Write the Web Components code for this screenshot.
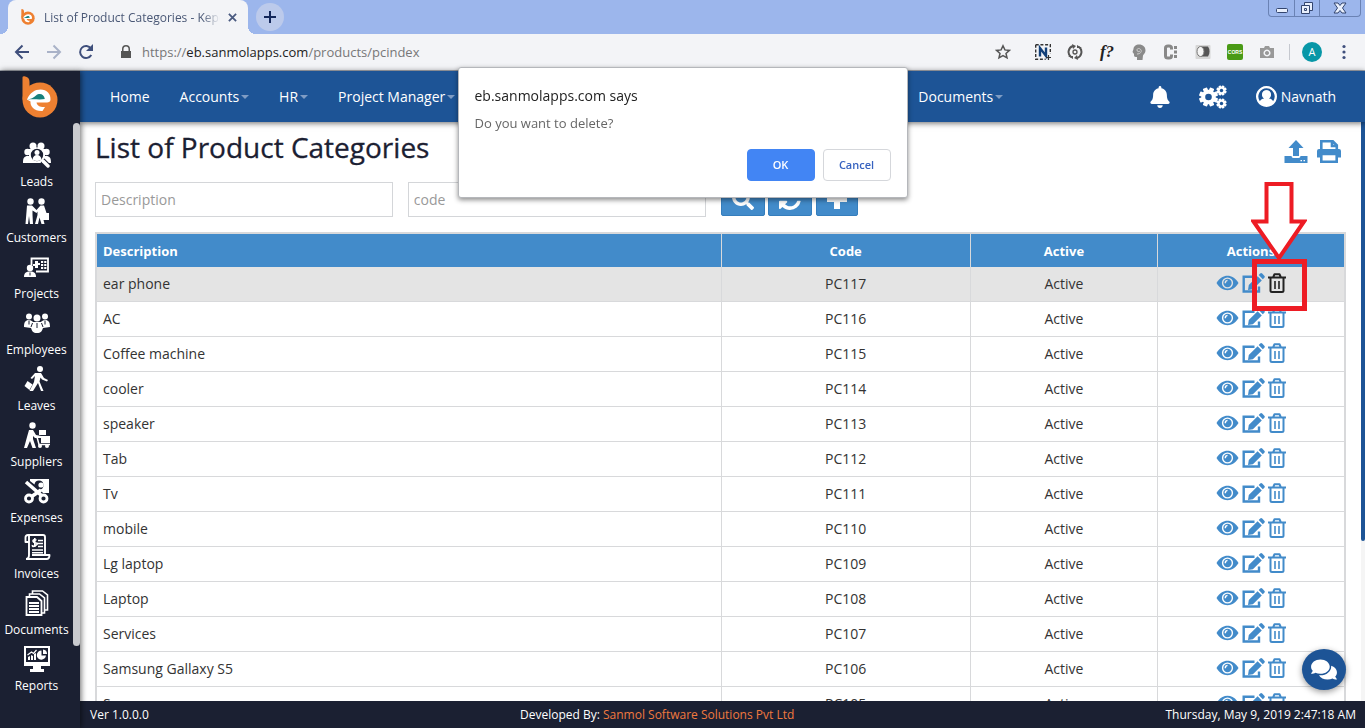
<!DOCTYPE html>
<html lang="en">
<head>
<meta charset="utf-8">
<title>List of Product Categories</title>
<style>
  html, body { margin: 0; height: 100%; }
  body {
    --navy: #1b2032; --blue: #1d5496; --accent: #428bca; --line: #d8d9db;
    font-family: "Open Sans", sans-serif; font-size: 14px; color: #333;
    display: flex; flex-direction: column; overflow: hidden; background: #fff;
  }
</style>
</head>
<body>
<browser-chrome></browser-chrome>
<app-shell>
  <app-sidebar slot="side">
    <side-item icon="leads">Leads</side-item>
    <side-item icon="customers">Customers</side-item>
    <side-item icon="projects">Projects</side-item>
    <side-item icon="employees">Employees</side-item>
    <side-item icon="leaves">Leaves</side-item>
    <side-item icon="suppliers">Suppliers</side-item>
    <side-item icon="expenses">Expenses</side-item>
    <side-item icon="invoices">Invoices</side-item>
    <side-item icon="documents">Documents</side-item>
    <side-item icon="reports">Reports</side-item>
  </app-sidebar>
  <app-navbar slot="nav"></app-navbar>
  <category-page></category-page>
  <app-footer slot="foot"></app-footer>
</app-shell>
<chat-button></chat-button>
<confirm-dialog heading="eb.sanmolapps.com says">Do you want to delete?</confirm-dialog>

<script>
const define = (name, markup, ready) => customElements.define(name, class extends HTMLElement {
  constructor() {
    super();
    this.attachShadow({ mode: 'open' });
  }
  connectedCallback() {
    if (this.shadowRoot.childNodes.length) return;
    const t = document.createElement('template');
    t.innerHTML = '<style>*{box-sizing:border-box}[hidden]{display:none}</style>' + (typeof markup === 'function' ? markup(this) : markup);
    this.shadowRoot.append(t.content.cloneNode(true));
    if (ready) ready(this, this.shadowRoot);
  }
});

const gear = (cx, cy, r, teeth, hole) => {
  let s = '';
  for (let i = 0; i < teeth; i++) {
    s += `<rect x="${cx - r * .24}" y="${cy - r}" width="${r * .48}" height="${r}" rx=".6" transform="rotate(${i * 360 / teeth + 22.5} ${cx} ${cy})"/>`;
  }
  return `${s}<circle cx="${cx}" cy="${cy}" r="${r * .76}"/><circle cx="${cx}" cy="${cy}" r="${hole}" fill="var(--hole)"/>`;
};
const S = 'fill="none" stroke="currentColor"';

/* name: [viewBox, drawing] */
const ICONS = {
  logo: ['0 0 36 42', `<circle cx="18" cy="24" r="17.500" fill="#ee8031"/><path d="M.5 24V1.500Q.5 0 2.500 .2Q7.500 1 7.500 6V13Z" fill="#ee8031"/>
    <path d="M5 23.500C8 16.500 13 13.500 18.500 13.500C25 13.500 28.800 18 28.500 23.500C28.400 25.800 27 26.500 25 26.500H14.500C15 30 19 31.500 23 31L20.500 35C12.500 35.500 8 30.500 8.500 25.500Z" fill="#fff"/>
    <path d="M5 23.500C9 22.800 11.500 22 14 19.500C17 17 22 17.500 22.800 23C19 23.800 13 23 5 23.500Z" fill="#17807c"/>`],
  back: ['0 0 16 16', `<path ${S} stroke-width="2" d="M15 8H2M8.500 1.500L2 8l6.500 6.500"/>`],
  forward: ['0 0 16 16', `<path ${S} stroke-width="2" d="M1 8h13M7.500 1.500L14 8l-6.500 6.500"/>`],
  reload: ['0 0 16 16', `<path ${S} stroke-width="2" d="M13.300 11A6 6 0 1 1 13 4.500"/><path d="M15 0v7H8z"/>`],
  lock: ['0 0 12 14', `<path d="M2 6V4a4 4 0 0 1 8 0v2h1v7H1V6zM3.500 6h5V4a2.500 2.500 0 0 0-5 0z" fill-rule="evenodd"/>`],
  star: ['0 0 16 16', `<path ${S} stroke-width="1.500" d="M8 1.800l1.900 4.100 4.500.500-3.400 3 1 4.400L8 11.500l-4 2.300 1-4.400-3.400-3 4.500-.500z"/>`],
  tabclose: ['0 0 10 10', `<path ${S} stroke-width="2" d="M1 1l8 8M9 1L1 9"/>`],
  newtab: ['0 0 12 12', `<path ${S} stroke-width="2" d="M6 0v12M0 6h12"/>`],
  dots: ['0 0 16 16', `<circle cx="8" cy="2.500" r="1.600"/><circle cx="8" cy="8" r="1.600"/><circle cx="8" cy="13.500" r="1.600"/>`],
  frame: ['0 0 16 16', `<path fill="none" stroke="#333" stroke-width="1.400" stroke-dasharray="3 1.700" d="M.7.7h14.600v9M.7.7v14.600h10"/><path fill="none" stroke="#123f78" stroke-width="2.400" d="M5 12.500V4l6 8V3.500"/><path fill="none" stroke="#333" stroke-width="1.200" d="M13.500 11v5M11 13.500h5"/>`],
  sync: ['0 0 16 16', `<path ${S} stroke-width="2" d="M6 2A6.300 6.300 0 0 0 4 13M10 14A6.300 6.300 0 0 0 12 3"/><path d="M5 0l4 2-3 3zM11 16l-4-2 3-3zM1 12h5v3zM15 4h-5V1z"/><circle cx="8" cy="8" r="2" ${S} stroke-width="1.300"/>`],
  head: ['0 0 16 16', `<path d="M8 .5c4 0 6.500 2.500 6.500 6 0 2.500-1.500 3-2.500 5L11.500 16H6v-3c-3 .500-3-1-3-3L1.500 8 2.500 5c0-2.500 2.500-4.500 5.500-4.500z" fill="#8a8a8a"/><path fill="none" stroke="#d0d0d0" d="M6 10c3 0 5-2 4-4s-4-2-4 0 2 2 3 1"/>`],
  colons: ['0 0 16 16', `<path ${S} stroke-width="3" d="M8.500 5.500V4q0-2-2.500-2H5Q2.500 2 2.500 4v8q0 2 2.500 2h1q2.500 0 2.500-2v-1.500"/><path d="M11 2h3v3h-3zM11 6.500h3v3h-3zM11 11h3v3h-3z"/>`],
  shade: ['0 0 16 16', `<rect x=".5" y="1" width="15" height="14" rx="1" fill="#d6d6d6"/><path d="M6 2.500h7q1.500 2 1.500 5t-1.500 5H6z" fill="#555"/><ellipse cx="5.500" cy="7.500" rx="3.500" ry="5" fill="#f4f4f4" stroke="#777"/>`],
  camera: ['0 0 16 16', `<path fill-rule="evenodd" d="M1 4h4l1-2h4l1 2h4v10H1zM8 5.500a3.500 3.500 0 1 0 .01 0zM8 7a2 2 0 1 1-.01 0z"/>`],
  bell: ['0 0 448 512', '<path d="M224 512c35.320 0 63.970-28.650 63.970-64H160.030c0 35.350 28.650 64 63.970 64zm215.390-149.710c-19.320-20.760-55.470-51.990-55.470-154.290 0-77.700-54.480-139.900-127.940-155.160V32c0-17.670-14.320-32-31.980-32s-31.980 14.330-31.980 32v20.840C118.560 68.100 64.080 130.300 64.080 208c0 102.300-36.150 133.530-55.470 154.290-6 6.450-8.660 14.160-8.610 21.710.11 16.400 12.980 32 32.100 32h383.800c19.120 0 32-15.600 32.100-32 .05-7.550-2.610-15.270-8.610-21.710z"/>'],
  cogs: ['0 0 28 24', `<g style="--hole:#1d5496">${gear(9.500, 12, 9.500, 8, 3.300)}${gear(22.500, 5.500, 5.200, 8, 1.700)}${gear(22.500, 18.500, 5.200, 8, 1.700)}</g>`],
  user: ['0 0 20 20', `<path fill-rule="evenodd" d="M10 0a10 10 0 1 1-.01 0zM10 2.200a7.800 7.800 0 0 0-6.300 12.300c1-1.700 2.300-2.500 4-2.500a4.300 4.300 0 1 1 4.600 0c1.700 0 3 .800 4 2.500A7.800 7.800 0 0 0 10 2.200z"/><circle cx="10" cy="8" r="3.900"/>`],
  eye: ['0 0 22 16', `<path d="M0 8C3 3 7 .8 11 .8S19 3 22 8c-3 5-7 7.200-11 7.200S3 13 0 8z"/><circle cx="11" cy="8" r="5.600" fill="var(--row,#fff)"/><circle cx="11" cy="8" r="4.200"/><path d="M8.800 8.200A2.600 2.600 0 0 1 11 5.400" fill="none" stroke="var(--row,#fff)" stroke-width="1.400"/>`],
  edit: ['0 0 23 20', `<path ${S} stroke-width="2.400" d="M12.500 3.700H1.700V18.500h15.300v-5"/><path d="M6.800 12L15.600 3.200l4.200 4.200-8.900 8.800L6 17zM16.700 2.100L18.200.6q1-1 2 0l2.100 2.100q1 1 0 2l-1.500 1.500z"/>`],
  trash: ['0 0 18 20', `<path ${S} stroke-width="2" stroke-linejoin="round" d="M0 4.500h18M5.300 4L6.500 1.200h5L12.700 4M2.500 5v12.500q0 1.500 1.500 1.500h10q1.500 0 1.500-1.500V5"/><path ${S} stroke-width="1.600" d="M7 8v8M11 8v8"/>`],
  upload: ['0 0 23 23', `<path d="M11.500 0L19 8h-4.500v8h-6V8H4zM0 16h7q0 2 2 2h5q2 0 2-2h7v7H0z"/><path fill="#fff" d="M16 20h1.500v1.300H16zM19 20h1.500v1.300H19z"/>`],
  print: ['0 0 24 23', `<path ${S} stroke-width="2.600" d="M4.300 10V1.300h11.500l4 4V10M15 1v5h5"/><path d="M0 17.500V11q0-2 2-2h20q2 0 2 2v6.500h-4V14H4v3.500z"/><path ${S} stroke-width="2.600" d="M4.300 14h15.400v7.700H4.300z"/>`],
  search: ['0 0 512 512', '<path d="M505 442.700L405.300 343c-4.500-4.500-10.600-7-17-7H372c27.600-35.300 44-79.700 44-128C416 93.100 322.900 0 208 0S0 93.100 0 208s93.100 208 208 208c48.300 0 92.700-16.400 128-44v16.300c0 6.400 2.500 12.500 7 17l99.700 99.700c9.400 9.400 24.600 9.400 33.900 0l28.300-28.300c9.400-9.400 9.400-24.600.1-34zM208 336c-70.700 0-128-57.200-128-128 0-70.700 57.200-128 128-128 70.700 0 128 57.200 128 128 0 70.700-57.200 128-128 128z"/>'],
  refresh: ['0 0 1536 1536', '<path d="M1511 928q0 5-1 7-64 268-268 434.500T764 1536q-146 0-282.500-55T238 1324l-129 129q-19 19-45 19t-45-19-19-45V960q0-26 19-45t45-19h448q26 0 45 19t19 45-19 45l-137 137q71 66 161 102t187 36q134 0 250-65t186-179q11-17 53-117 8-23 30-23h192q13 0 22.500 9.500t9.500 22.500zm25-800v448q0 26-19 45t-45 19h-448q-26 0-45-19t-19-45 19-45l138-138Q969 256 768 256q-134 0-250 65T332 500q-11 17-53 117-8 23-30 23H50q-13 0-22.500-9.500T18 608v-7q65-268 270-434.500T768 0q146 0 284 55.500T1297 212l130-129q19-19 45-19t45 19 19 45z"/>'],
  plus: ['0 0 20 20', '<path d="M7 0h6v7h7v6h-7v7H7v-7H0V7h7z"/>'],
  chat: ['0 0 576 512', '<path d="M416 192c0-88.400-93.100-160-208-160S0 103.600 0 192c0 34.300 14.100 65.900 38 92-13.400 30.200-35.500 54.200-35.800 54.500-2.200 2.300-2.800 5.700-1.500 8.700S4.800 352 8 352c36.600 0 66.900-12.300 88.700-25 32.200 15.700 70.300 25 111.300 25 114.900 0 208-71.600 208-160zm122 220c23.900-26 38-57.700 38-92 0-66.900-53.500-124.200-129.300-148.100.9 6.600 1.300 13.300 1.300 20.100 0 105.900-107.700 192-240 192-10.800 0-21.300-.8-31.700-1.900C207.800 439.600 281.800 480 368 480c41 0 79.100-9.200 111.300-25 21.800 12.700 52.100 25 88.700 25 3.200 0 6.100-1.900 7.300-4.800 1.300-2.900.7-6.300-1.500-8.700-.3-.3-22.400-24.200-35.800-54.500z"/>'],
  winmin: ['0 0 14 12', '<rect x="1.500" y="6.500" width="11" height="4" rx="1" fill="#e8effc" stroke="#33456e"/>'],
  winmax: ['0 0 14 12', '<path fill="#e8effc" stroke="#33456e" d="M4.500.5h8v8h-8z"/><path fill="#e8effc" stroke="#33456e" d="M1.500 3.500h8v8h-8zM4.500 6.500h2v2h-2z"/>'],
  winclose: ['0 0 14 12', '<path fill="#e8effc" stroke="#33456e" d="M1 1h4l2 2.500L9 1h4L9.500 6l3.500 5H9L7 8.500 5 11H1l3.500-5z"/>'],

  leads: ['0 0 28 26', `<circle cx="10" cy="4" r="3.500"/><circle cx="18" cy="4" r="3.500"/><circle cx="4.500" cy="10" r="3.200"/><circle cx="23.500" cy="10" r="3.200"/><path d="M0 21c0-5 1-7 5-7h18c4 0 5 2 5 7zM6 7h16v8H6z"/><circle cx="14" cy="13" r="7" fill="#1b2032" stroke="#fff" stroke-width="1.600"/><circle cx="14" cy="10.500" r="2.500"/><path d="M9.500 17.500c.5-3 2-4.500 4.500-4.500s4 1.500 4.500 4.500Q14 20.500 9.500 17.500z"/><path stroke="#1b2032" stroke-width="5.500" d="M19.500 18.500l5 5"/><path stroke="#fff" stroke-width="3.400" stroke-linecap="round" d="M20 19l5 5"/>`],
  customers: ['0 0 28 26', `<circle cx="7.500" cy="3.500" r="3.200"/><circle cx="18.500" cy="3.500" r="3.200"/><path d="M4 7.500h5l4.500 4.500 4-4.500h3.500L23.500 15H26v7h-5.500l1 4h-3L16.500 19.500 15 26h-3l2.500-9v-3.500l-1 1.500-4-2.500V17l.5 9H7l-1-8-1 8H2.500z"/>`],
  projects: ['0 0 28 26', `<path ${S} stroke-width="1.800" d="M8.500 11V4.500H25v13H13"/><circle cx="7" cy="14" r="3.200"/><path d="M1 23c0-4 2-5.500 6-5.500s6 1.500 6 5.500zM12 7h3v2h2v2h-2v3h-3v-2h-2v-2h2zM18 7h2.200v2H18zM21.200 7h2.200v2h-2.200zM18 10h2.200v2H18zM21.200 10h2.200v2h-2.200zM18 13h2.200v2H18zM21.200 13h2.200v2h-2.200z"/><path stroke="#1b2032" d="M7 18.500v3"/>`],
  employees: ['0 0 28 26', `<circle cx="6" cy="6.500" r="3"/><circle cx="22" cy="6.500" r="3"/><circle cx="14" cy="8" r="3.500"/><path d="M1 17c0-5 1.500-7 5-7 2 0 3 1 4 2h8c1-1 2-2 4-2 3.500 0 5 2 5 7l-7 1c-1 3-2 5-6 5s-5-2-6-5z"/><path stroke="#1b2032" d="M6 10.500v4M22 10.500v4M14 13v5M9.500 13l-1.500 4M18.500 13l1.500 4"/>`],
  leaves: ['0 0 28 26', `<circle cx="17" cy="3" r="3"/><path d="M12 7h6l3 5 4 2-1 1.500-5-2-1.500-2-1 4 4 9.500H18l-3-8-5 8H6.500L11 16l1-6-3 3-1.500-1z"/><path d="M4.500 15l5 3.500L6.500 24 1.500 20z"/>`],
  suppliers: ['0 0 28 26', `<circle cx="9.500" cy="3.500" r="3.200"/><path d="M6 8h4l3 5 5 1v2h-6l-2-2v3l3 9H9.500L7 19l-3 7H1l3-11z"/><path ${S} stroke-width="1.500" d="M14 15l2 7.500h11"/><path d="M16 8h7v5h-7zM18 14h9v7h-9z"/><circle cx="17" cy="24" r="2"/><circle cx="24" cy="24" r="2"/>`],
  expenses: ['0 0 28 26', `<path fill-rule="evenodd" d="M7 1h19v14h-6l-3-3.500a4.500 4.500 0 1 0-5.500-5L7 3z"/><circle cx="18" cy="7" r="2.600"/><path stroke="#fff" stroke-width="3.600" d="M3 4l16 14M18 12L8 19"/><circle cx="6" cy="20.500" r="3.500" ${S} stroke-width="2.800"/><circle cx="20.500" cy="20.500" r="3.500" ${S} stroke-width="2.800"/>`],
  invoices: ['0 0 28 26', `<path ${S} stroke-width="1.900" stroke-linejoin="round" d="M6 8H2.500V3.500Q2.500 1 5 1H20q2 0 2 2V20M6 3v18q0 4-3 4M6 1v20M9 21H26.500q0 4-3 4H4"/><path ${S} stroke-width="1.600" d="M13.500 6q-3.500-1-3.500.8T13 9t-.500 2.500T9.500 11M11.800 4v9M15 6.500h5M15 9.500h5M15 12.500h5M9 16h11M9 18.800h11"/>`],
  documents: ['0 0 28 26', `<path ${S} stroke-width="1.600" d="M9.500 4.500V1h10l5 4v15h-3M6.500 7.500V4h10l5 4v15h-3"/><path ${S} stroke-width="1.800" d="M3.500 7H14l4.500 4v14h-15zM6 13h10M6 16h10M6 19h10M6 22h10"/>`],
  reports: ['0 0 28 26', `<path fill-rule="evenodd" d="M1 0h26v20h-9v3h3v3H7v-3h3v-3H1zM3 2v14h22V2z"/><path d="M5 14v-3l2-1v4zM8 14V9l2 1v4zM11 14V8l2-1v7z"/><path ${S} stroke-width="1.200" d="M4.500 9l4-3 2 1.500 3-3.500"/><path d="M18.500 4.500v5h4.500a4.600 4.600 0 1 1-4.500-5z"/><path d="M20 3.500a4.500 4.500 0 0 1 4 4.500h-4z"/>`]
};

define('eb-icon', el => {
  const [box, art] = ICONS[el.getAttribute('name')];
  return `<style>:host{display:inline-block;width:16px;height:16px;line-height:0;flex:none}svg{display:block;width:100%;height:100%;fill:currentColor}</style>
  <svg viewBox="${box}" aria-hidden="true">${art}</svg>`;
});

define('browser-chrome', `<style>
  :host{display:block;flex:none;font-size:12px}
  .strip{height:34px;background:#9cb6ec;display:flex;align-items:flex-end;padding-left:8px;position:relative}
  .tab{width:240px;height:34px;background:#f3f4f7;border-radius:8px 8px 0 0;display:flex;align-items:center;padding:0 10px 0 12px;color:#4a5876;position:relative}
  .tab::before,.tab::after{content:"";position:absolute;bottom:0;width:8px;height:8px}
  .tab::before{left:-8px;background:radial-gradient(circle at 0 0,transparent 8px,#f3f4f7 8px)}
  .tab::after{right:-8px;background:radial-gradient(circle at 100% 0,transparent 8px,#f3f4f7 8px)}
  .tab span{flex:1;margin:0 6px 0 8px;white-space:nowrap;overflow:hidden;-webkit-mask-image:linear-gradient(90deg,#000 90%,transparent);mask-image:linear-gradient(90deg,#000 90%,transparent)}
  button{border:0;background:none;padding:0;font:inherit;display:flex;align-items:center;justify-content:center;color:#4a5a80}
  .x{width:12px;height:20px}.x eb-icon{width:9px;height:9px}
  .new{width:28px;height:28px;border-radius:14px;background:#bccaeb;color:#14275a;margin:0 0 3px 8px}.new eb-icon{width:12px;height:12px}
  .win{position:absolute;right:4px;top:0;display:flex;border:1px solid #6a82b4;border-top:0;border-radius:0 0 4px 4px}
  .win button{width:25px;height:16px}.win button+button{border-left:1px solid #6a82b4}.win button:last-child{width:41px}
  .win eb-icon{width:14px;height:12px}
  .bar{height:36px;background:#f3f4f7;display:flex;align-items:center;padding:0 5px 0 6px;font-size:13px}
  .bar button{width:32px;height:28px;flex:none;color:#555}
  .bar .nav{color:#3f4f7c}.bar .off{color:#a9b2c8}
  .lock{color:#555;width:12px;height:14px;margin:0 10px 0 18px}
  .url{flex:1;color:#777;white-space:nowrap;line-height:20px}.url b{font-weight:400;color:#222}
  .star{margin-right:8px}
  .bar .fx{font:italic bold 17px "Liberation Serif",serif;color:#222}
  .bar .c{color:#888}
  .bar .cam{color:#999}
  .cors span{background:#4a9a16;color:#fff;font:bold 5px/16px "Liberation Sans",sans-serif;width:16px;height:16px;text-align:center;border-radius:2px}
  .rule{width:1px;height:16px;background:#c5c8cf;margin:0 6px}
  .me span{width:20px;height:20px;border-radius:10px;background:#0797a7;color:#fff;font-size:11px;line-height:20px;text-align:center}
  .edge{height:1px;background:#a9adb5}
</style>
<div class="strip">
  <div class="tab"><eb-icon name="logo"></eb-icon><span>List of Product Categories - Kepco</span><button class="x" aria-label="Close tab"><eb-icon name="tabclose"></eb-icon></button></div>
  <button class="new" aria-label="New tab"><eb-icon name="newtab"></eb-icon></button>
  <div class="win"><button aria-label="Minimize"><eb-icon name="winmin"></eb-icon></button><button aria-label="Restore"><eb-icon name="winmax"></eb-icon></button><button aria-label="Close"><eb-icon name="winclose"></eb-icon></button></div>
</div>
<div class="bar">
  <button class="nav" aria-label="Back"><eb-icon name="back"></eb-icon></button>
  <button class="nav off" aria-label="Forward"><eb-icon name="forward"></eb-icon></button>
  <button class="nav" aria-label="Reload"><eb-icon name="reload"></eb-icon></button>
  <eb-icon class="lock" name="lock"></eb-icon>
  <div class="url">https://<b>eb.sanmolapps.com</b>/products/pcindex</div>
  <button class="star" aria-label="Bookmark"><eb-icon name="star"></eb-icon></button>
  <button aria-label="Capture"><eb-icon name="frame"></eb-icon></button>
  <button aria-label="Sync"><eb-icon name="sync"></eb-icon></button>
  <button class="fx">f?</button>
  <button aria-label="Profile"><eb-icon name="head"></eb-icon></button>
  <button class="c" aria-label="Console"><eb-icon name="colons"></eb-icon></button>
  <button aria-label="Shade"><eb-icon name="shade"></eb-icon></button>
  <button class="cors"><span>CORS</span></button>
  <button class="cam" aria-label="Screenshot"><eb-icon name="camera"></eb-icon></button>
  <div class="rule"></div>
  <button class="me"><span>A</span></button>
  <button class="nav" aria-label="Menu"><eb-icon name="dots"></eb-icon></button>
</div>
<div class="edge"></div>`);

define('app-shell', `<style>
  :host{flex:1;min-height:0;display:grid;grid-template:51px minmax(0,1fr) 27px / 80px minmax(0,1fr)}
  .side{grid-row:1/4;min-height:0;z-index:3;display:grid}
  .nav{z-index:2;display:grid}.page{min-height:0;display:grid}.foot{z-index:2;display:grid}
</style>
<div class="side"><slot name="side"></slot></div><div class="nav"><slot name="nav"></slot></div>
<main class="page"><slot></slot></main><div class="foot"><slot name="foot"></slot></div>`);

define('app-sidebar', `<style>
  :host{display:flex;flex-direction:column;min-height:0;background:var(--navy);box-shadow:1px 0 6px rgba(0,0,0,.6)}
  .logo{height:52px;display:flex;align-items:center;justify-content:center;flex:none}
  .logo eb-icon{width:36px;height:42px}
  .scroll{flex:1;min-height:0;display:grid;grid-template-columns:1fr 7px}
  nav{display:flex;flex-direction:column;padding-top:15px;overflow:hidden}
  .thumb{height:523px;background:#c9cacf;border-radius:4px}
</style>
<div class="logo"><eb-icon name="logo"></eb-icon></div>
<div class="scroll"><nav><slot></slot></nav><div class="thumb"></div></div>`);

define('side-item', el => `<style>
  :host{display:block;height:56px;flex:none}
  a{display:flex;flex-direction:column;align-items:center;color:#fff;text-decoration:none;font-size:12px;line-height:20px;padding-top:4px;white-space:nowrap}
  eb-icon{width:28px;height:26px;margin-bottom:4px}
</style><a href="#"><eb-icon name="${el.getAttribute('icon')}"></eb-icon><slot></slot></a>`);

define('nav-item', el => `<style>
  :host{display:block}
  a{display:flex;align-items:center;color:#fff;text-decoration:none;line-height:20px;white-space:nowrap}
  i{border:4px solid transparent;border-top-color:#7f9cc4;border-bottom:0;margin-left:2px}
</style><a href="#"><slot></slot>${el.hasAttribute('menu') ? '<i></i>' : ''}</a>`);

define('app-navbar', `<style>
  :host{display:flex;align-items:center;justify-content:space-between;background:var(--blue);padding:0 29px 0 30px;color:#fff;box-shadow:0 1px 6px rgba(0,0,0,.6)}
  nav,.tools{display:flex;align-items:center}
  nav{gap:30px}.tools{gap:29px}
  .second{margin-left:433px}
  button{border:0;background:none;color:inherit;font:inherit;padding:0;display:flex;align-items:center;gap:4px}
  .bell{width:20px;height:22px}.cogs{width:28px;height:24px}.user{width:21px;height:21px}
</style>
<nav><nav-item>Home</nav-item><nav-item menu>Accounts</nav-item><nav-item menu>HR</nav-item><nav-item menu>Project Manager</nav-item><nav-item class="second" menu>Documents</nav-item></nav>
<div class="tools"><button aria-label="Notifications"><eb-icon class="bell" name="bell"></eb-icon></button><button aria-label="Settings"><eb-icon class="cogs" name="cogs"></eb-icon></button><button><eb-icon class="user" name="user"></eb-icon>Navnath</button></div>`);

/* Red arrow and frame around a control in its cell */
define('callout-marker', `<style>
  :host{position:absolute;z-index:1;pointer-events:none;width:56px;height:130px}
  svg{display:block;width:100%;height:100%}
</style><svg viewBox="0 0 56 130" fill="none" stroke="#ed1c24" stroke-width="4"><path fill="#fff" d="M15.500 3h25v37.500H53L28 77 2.500 40.500h13z"/><rect x="3.500" y="80.500" width="50" height="47" stroke-width="5"/></svg>`);

define('category-table', `<style>
  :host{display:block}
  table{width:100%;table-layout:fixed;border-collapse:separate;border-spacing:0;border:2px solid var(--line);border-bottom:0;line-height:20px}
  th{background:var(--accent);color:#fff;height:33px;padding:0 6px;font-weight:700;font-size:13px}
  td{height:35px;padding:0 6px;border-bottom:1px solid var(--line);text-align:center}
  th:not(:first-child),td:not(:first-child){border-left:1px solid var(--line)}
  th:first-child,td:first-child{text-align:left}
  col:nth-child(1){width:50%}col:nth-child(2){width:20%}col:nth-child(3),col:nth-child(4){width:15%}
  tr.on td{background:#e4e4e4}tr.on{--row:#e4e4e4}
  .acts{display:flex;justify-content:center;align-items:center;gap:3px;position:relative;padding-bottom:2px}
  button{border:0;background:none;padding:0;display:flex;color:var(--accent)}
  .eye{width:23px;height:16px}.edit{width:23px;height:20px}.trash{width:18px;height:20px}
  tr.on button:nth-child(3){color:#222}
  callout-marker{left:50%;bottom:-16px}
</style>
<table><colgroup><col><col><col><col></colgroup>
<thead><tr><th>Description</th><th>Code</th><th>Active</th><th>Actions</th></tr></thead><tbody></tbody></table>`, (el, root) => {
  const names = ['ear phone', 'AC', 'Coffee machine', 'cooler', 'speaker', 'Tab', 'Tv', 'mobile', 'Lg laptop', 'Laptop', 'Services', 'Samsung Gallaxy S5', 'Samsung'];
  root.querySelector('tbody').innerHTML = names.map((n, i) => `<tr${i ? '' : ' class="on"'}><td>${n}</td><td>PC${117 - i}</td><td>Active</td><td><div class="acts">
    <button aria-label="View"><eb-icon class="eye" name="eye"></eb-icon></button><button aria-label="Edit"><eb-icon class="edit" name="edit"></eb-icon></button><button aria-label="Delete"><eb-icon class="trash" name="trash"></eb-icon></button>${i ? '' : '<callout-marker></callout-marker>'}</div></td></tr>`).join('');
});

define('category-page', `<style>
  :host{display:grid;grid-template-columns:minmax(0,1fr) 4px;min-height:0;overflow:hidden;background:#fff}
  .body{padding:5px 15px 0;min-height:0;overflow:hidden}
  header{display:flex;align-items:center;justify-content:space-between;padding-right:5px}
  h1{margin:0;font-size:28px;line-height:40px;font-weight:400;color:#1b2032;-webkit-text-stroke:.3px #1b2032}
  .tools{display:flex;gap:9px;padding-top:8px}
  button{border:0;padding:0;background:none;color:var(--accent);display:flex;align-items:center;justify-content:center}
  .tools eb-icon{width:24px;height:23px}
  form{display:flex;gap:15px;margin:15px 0}
  input{width:calc(25% - 15px);height:35px;border:1px solid #d4d6d9;padding:0 5px;font:inherit;color:#333;background:#fff;margin:0}
  input::placeholder{color:#999;opacity:1}
  .btns{display:flex;gap:3px}
  .btns button{background:var(--accent);color:#fff;width:44px;height:34px;border-radius:2px;border:1px solid #357ebd}
  .btns button:last-child{width:42px;margin-left:1px}
  .btns eb-icon{width:22px;height:22px}.btns button:last-child eb-icon{width:20px;height:20px}
  .track{background:#f5f5f5}.thumb{background:var(--blue);height:419px;border-radius:0 0 3px 3px}
</style>
<div class="body">
  <header><h1>List of Product Categories</h1><div class="tools"><button aria-label="Export"><eb-icon name="upload"></eb-icon></button><button aria-label="Print"><eb-icon name="print"></eb-icon></button></div></header>
  <form><input aria-label="Description" placeholder="Description"><input aria-label="code" placeholder="code">
    <div class="btns"><button type="button" aria-label="Search"><eb-icon name="search"></eb-icon></button><button type="button" aria-label="Refresh"><eb-icon name="refresh"></eb-icon></button><button type="button" aria-label="Add"><eb-icon name="plus"></eb-icon></button></div></form>
  <category-table></category-table>
</div>
<div class="track"><div class="thumb"></div></div>`);

define('app-footer', `<style>
  :host{display:flex;justify-content:space-between;align-items:center;background:var(--navy);color:#fff;font-size:12px;line-height:20px;padding:0 9px 0 10px;white-space:nowrap}
  a{color:#f0793f;text-decoration:none}
</style><span>Ver 1.0.0.0</span><span>Developed By: <a href="#">Sanmol Software Solutions Pvt Ltd</a></span><time>Thursday, May 9, 2019 2:47:18 AM</time>`);

define('chat-button', `<style>
  :host{position:fixed;right:19px;bottom:38px;z-index:5}
  button{width:44px;height:41px;border:0;border-radius:50%;background:var(--blue);color:#fff;display:flex;align-items:center;justify-content:center;padding:0;box-shadow:0 2px 6px rgba(0,0,0,.4)}
  eb-icon{width:26px;height:23px}
</style><button aria-label="Chat"><eb-icon name="chat"></eb-icon></button>`);

define('confirm-dialog', el => `<style>
  :host{position:fixed;left:0;right:0;top:67px;z-index:10;display:flex;justify-content:center}
  dialog{position:static;margin:0;width:450px;background:#fff;border:1px solid #b5b7bb;border-radius:3px;padding:18px 16px 16px;box-shadow:0 2px 5px rgba(0,0,0,.45);color:#666;font-size:13px;line-height:20px}
  h2{margin:0 0 7px;font-size:14px;line-height:20px;font-weight:400;color:#222}
  p{margin:0 0 16px}
  div{display:flex;justify-content:flex-end;gap:8px}
  button{width:68px;height:32px;border-radius:4px;border:1px solid #d5d7db;background:#fff;color:#3763c0;font:600 11px "Open Sans",sans-serif;padding:0 0 2px}
  .ok{background:#4285f4;border-color:#4285f4;color:#fff}
</style><dialog open aria-label="Confirm"><h2>${el.getAttribute('heading')}</h2><p><slot></slot></p><div><button class="ok">OK</button><button>Cancel</button></div></dialog>`);
</script>
</body>
</html>
